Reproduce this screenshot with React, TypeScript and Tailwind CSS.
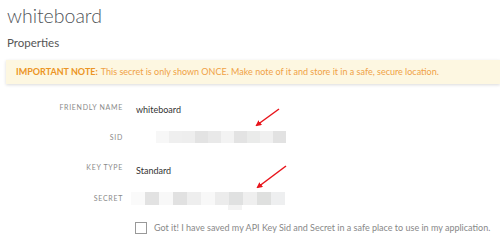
import React from "react";

const sidBlocks = ["#f7f7f7", "#efefef", "#eeeeee", "#e3e3e3", "#e9e9e9", "#f3f3f3", "#e3e3e3", "#eaebea", "#f0f0f0", "#e2e2e2"];
const secretBlocks = ["#fafafa", "#e2e2e2", "#f8f8f8", "#e1e1e1", "#eeeeee", "#f8f8f8", "#ececec", "#e0e1e1", "#efefef", "#dfe0df", "#eeeff0"];

function Row({ label, children, h }: { label: string; children: React.ReactNode; h: string }) {
  return (
    <div className={`flex items-center ${h}`}>
      <div className="w-[123px] shrink-0 text-right text-[7px] tracking-[0.1em] text-[#8a8a8a] uppercase whitespace-nowrap">{label}</div>
      <div className="ml-[13px] flex-1">{children}</div>
    </div>
  );
}

export default function App() {
  return (
    <div className="relative w-[500px] h-[246px] overflow-hidden bg-white" style={{ fontFamily: "Lato, 'Open Sans', sans-serif" }}>
      <div className="pl-[7px] pt-[1px]">
        <div className="text-[19.5px] font-light text-[#4f5358] leading-[30px] whitespace-nowrap">whiteboard</div>
        <div className="mt-[4px] text-[11.5px] text-[#555] leading-[16px] whitespace-nowrap">Properties</div>
      </div>
      <div className="ml-[6px] mt-[9px] h-[24px] bg-[#fdf7e1] shadow-[0_1px_3px_rgba(0,0,0,0.15)] flex items-center pl-[10px] text-[9px] text-[#f0a246] whitespace-nowrap">
        <span className="font-bold text-[#ec9525]">IMPORTANT NOTE:</span>
        <span className="ml-[3px]">This secret is only shown ONCE. Make note of it and store it in a safe, secure location.</span>
      </div>
      <div className="mt-[8px]">
        <Row label="Friendly Name" h="h-[30px]">
          <span className="text-[9px] text-[#333] whitespace-nowrap">whiteboard</span>
        </Row>
        <Row label="SID" h="h-[30px]">
          <div className="flex ml-[20px]">
            {sidBlocks.map((c, i) => (
              <div key={i} className="w-[13px] h-[12px]" style={{ background: c }} />
            ))}
          </div>
        </Row>
        <Row label="Key Type" h="h-[31px]">
          <span className="text-[9px] text-[#333] whitespace-nowrap">Standard</span>
        </Row>
        <Row label="Secret" h="h-[30px]">
          <div className="relative flex -ml-[5px]">
            {secretBlocks.map((c, i) => (
              <div key={i} className="w-[14px] h-[13px]" style={{ background: c }} />
            ))}
            <div className="absolute left-[97px] top-[13px] w-[14px] h-[5px] bg-[#f3f3f3]" />
          </div>
        </Row>
        <div className="flex items-center mt-[8px] ml-[135px]">
          <div className="w-[12px] h-[12px] shrink-0 border border-[#999] bg-white" />
          <span className="ml-[7px] text-[9px] text-[#888] whitespace-nowrap">Got it! I have saved my API Key Sid and Secret in a safe place to use in my application.</span>
        </div>
      </div>
      <svg className="absolute left-0 top-0" width="500" height="246">
        <defs>
          <marker id="ah" markerWidth="6" markerHeight="6" refX="4" refY="3" orient="auto" markerUnits="userSpaceOnUse">
            <path d="M0,0 L6,3 L0,6 z" fill="#e8141b" />
          </marker>
        </defs>
        <line x1="279" y1="109" x2="257" y2="125" stroke="#e8141b" strokeWidth="1.5" markerEnd="url(#ah)" />
        <line x1="286" y1="166" x2="258" y2="187" stroke="#e8141b" strokeWidth="1.5" markerEnd="url(#ah)" />
      </svg>
    </div>
  );
}
